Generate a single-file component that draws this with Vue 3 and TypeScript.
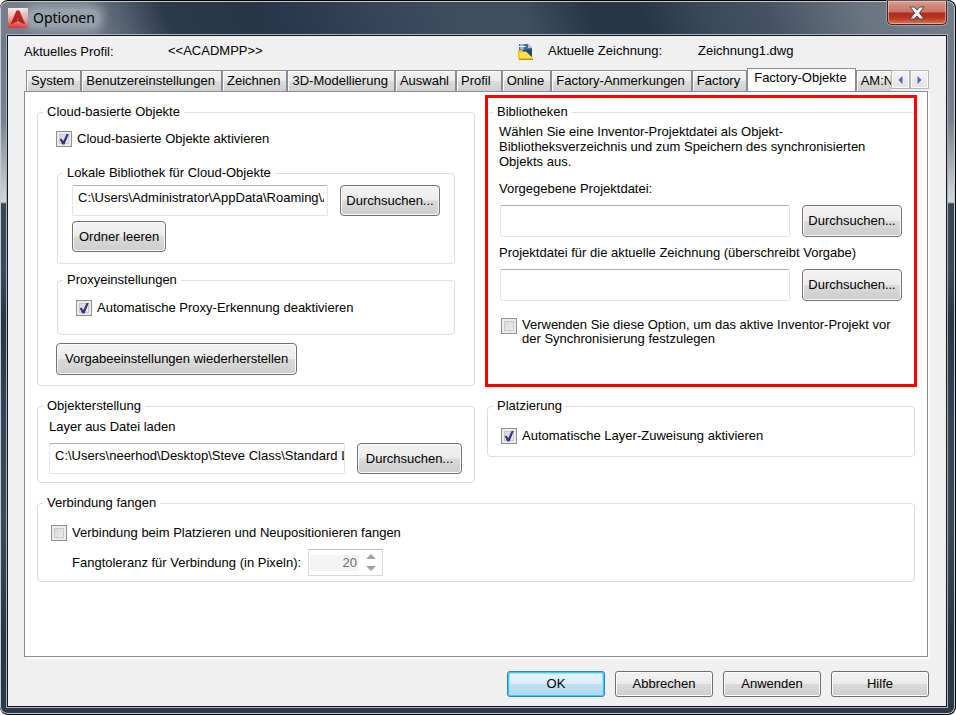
<script setup lang="ts">
import { ref } from 'vue'

interface Tab {
  label: string
  active?: boolean
  wide?: boolean
}

const tabs: Tab[] = [
  { label: 'System' },
  { label: 'Benutzereinstellungen' },
  { label: 'Zeichnen' },
  { label: '3D-Modellierung' },
  { label: 'Auswahl' },
  { label: 'Profil', wide: true },
  { label: 'Online' },
  { label: 'Factory-Anmerkungen' },
  { label: 'Factory' },
  { label: 'Factory-Objekte', active: true },
  { label: 'AM:N' },
]

const cloudEnabled = ref(true)
const proxyDisabled = ref(true)
const useActiveProject = ref(false)
const autoLayer = ref(true)
const snapOnPlace = ref(false)
const libraryPath = ref('C:\\Users\\Administrator\\AppData\\Roaming\\Autodesk')
const layerPath = ref('C:\\Users\\neerhod\\Desktop\\Steve Class\\Standard Layer')
const defaultProject = ref('')
const drawingProject = ref('')
const tolerance = ref('20')
</script>

<template>
  <div class="window">
    <header class="titlebar">
      <svg class="app-icon" viewBox="0 0 20 20" aria-hidden="true">
        <defs>
          <linearGradient id="tile" x1="0" y1="0" x2="0" y2="1">
            <stop offset="0" stop-color="#fbeeea" />
            <stop offset="0.5" stop-color="#eda8a0" />
            <stop offset="1" stop-color="#dc2f32" />
          </linearGradient>
          <linearGradient id="mark" x1="0" y1="0" x2="1" y2="1">
            <stop offset="0" stop-color="#d42a28" />
            <stop offset="1" stop-color="#8f1216" />
          </linearGradient>
        </defs>
        <rect width="20" height="20" fill="url(#tile)" />
        <path d="M8.400 2.400h3L17.400 16.400 12.600 14.600 10.200 12.800 7 14.600 2.600 16.600z" fill="url(#mark)" />
        <path d="M9.800 8.600l1.200 3-2.600.6z" fill="#c9473f" />
      </svg>
      <h1 class="title">Optionen</h1>
      <button class="close" type="button" aria-label="Schließen">
        <svg viewBox="0 0 16 14" aria-hidden="true">
          <path d="M1 1h4.300L8 4.100 10.700 1H15l-4.600 6 4.600 6h-4.300L8 9.900 5.300 13H1l4.600-6z" fill="#f4f4f4" stroke="#4d4a55" stroke-width="1" />
        </svg>
      </button>
    </header>

    <main class="client">
      <div class="profile">
        <span class="profile-label">Aktuelles Profil:</span>
        <span class="profile-name">&lt;&lt;ACADMPP&gt;&gt;</span>
        <svg class="drawing-icon" viewBox="0 0 16 17" aria-hidden="true">
          <path d="M1 1h9l4 4v10H1z" fill="#3b6f9f" />
          <path d="M10 1l4 4h-4z" fill="#a9c8e4" />
          <path d="M5 7l9-1v9H8z" fill="#1f4a76" />
          <path d="M4 0v7M.5 3.500h7" stroke="#f6fafd" stroke-width="1" />
          <path d="M2 1.500h1v1H2zM5 1.500h1v1H5zM2 4.500h1v1H2zM5 4.500h1v1H5z" fill="#e3edf6" />
          <path d="M0 7h4l1 1.500h3L15 15v2H1L0 15z" fill="#edbd1a" />
          <path d="M1 9.500l7-.5 6.500 6H2z" fill="#ffdf4d" />
          <path d="M1 16h14v1H1z" fill="#b98d10" />
        </svg>
        <span class="drawing-label">Aktuelle Zeichnung:</span>
        <span>Zeichnung1.dwg</span>
      </div>

      <div class="tabbar">
        <div class="tabs" role="tablist">
          <button
            v-for="tab in tabs"
            :key="tab.label"
            type="button"
            role="tab"
            class="tab"
            :class="{ active: tab.active, wide: tab.wide }"
            :aria-selected="!!tab.active"
          >{{ tab.label }}</button>
        </div>
        <div class="scrollers">
          <button type="button" aria-label="Zurück">
            <svg viewBox="0 0 5 8" aria-hidden="true"><path d="M4.500 0v8L.5 4z" fill="#4a63b8" /></svg>
          </button>
          <button type="button" aria-label="Weiter">
            <svg viewBox="0 0 5 8" aria-hidden="true"><path d="M.5 0v8l4-4z" fill="#4a63b8" /></svg>
          </button>
        </div>
      </div>

      <section class="panel" role="tabpanel">
        <div class="columns top-row">
          <fieldset class="group left">
            <legend>Cloud-basierte Objekte</legend>
            <div class="cloud">
              <label class="check">
                <input v-model="cloudEnabled" type="checkbox" />
                <span>Cloud-basierte Objekte aktivieren</span>
              </label>
              <fieldset class="group library">
                <legend>Lokale Bibliothek für Cloud-Objekte</legend>
                <div class="library-body">
                  <div class="field-row">
                    <input v-model="libraryPath" class="text" type="text" aria-label="Lokale Bibliothek" />
                    <button class="btn browse" type="button">Durchsuchen...</button>
                  </div>
                  <button class="btn" type="button">Ordner leeren</button>
                </div>
              </fieldset>
              <fieldset class="group proxy">
                <legend>Proxyeinstellungen</legend>
                <label class="check">
                  <input v-model="proxyDisabled" type="checkbox" />
                  <span>Automatische Proxy-Erkennung deaktivieren</span>
                </label>
              </fieldset>
              <button class="btn restore" type="button">Vorgabeeinstellungen wiederherstellen</button>
            </div>
          </fieldset>

          <div class="right highlight">
            <fieldset class="group">
              <legend>Bibliotheken</legend>
              <div class="projects">
                <p class="hint">Wählen Sie eine Inventor-Projektdatei als Objekt-Bibliotheksverzeichnis und zum Speichern des synchronisierten Objekts aus.</p>
                <label class="caption" for="default-project">Vorgegebene Projektdatei:</label>
                <div class="field-row">
                  <input id="default-project" v-model="defaultProject" class="text" type="text" />
                  <button class="btn browse" type="button">Durchsuchen...</button>
                </div>
                <label class="caption" for="drawing-project">Projektdatei für die aktuelle Zeichnung (überschreibt Vorgabe)</label>
                <div class="field-row">
                  <input id="drawing-project" v-model="drawingProject" class="text" type="text" />
                  <button class="btn browse" type="button">Durchsuchen...</button>
                </div>
                <label class="check multiline">
                  <input v-model="useActiveProject" type="checkbox" />
                  <span>Verwenden Sie diese Option, um das aktive Inventor-Projekt vor der Synchronisierung festzulegen</span>
                </label>
              </div>
            </fieldset>
          </div>
        </div>

        <div class="columns second-row">
          <fieldset class="group left">
            <legend>Objekterstellung</legend>
            <div class="creation">
              <label class="caption" for="layer-path">Layer aus Datei laden</label>
              <div class="field-row">
                <input id="layer-path" v-model="layerPath" class="text" type="text" />
                <button class="btn browse" type="button">Durchsuchen...</button>
              </div>
            </div>
          </fieldset>
          <fieldset class="group right">
            <legend>Platzierung</legend>
            <div class="placement">
              <label class="check">
                <input v-model="autoLayer" type="checkbox" />
                <span>Automatische Layer-Zuweisung aktivieren</span>
              </label>
            </div>
          </fieldset>
        </div>

        <fieldset class="group">
          <legend>Verbindung fangen</legend>
          <div class="snapping">
            <label class="check">
              <input v-model="snapOnPlace" type="checkbox" />
              <span>Verbindung beim Platzieren und Neupositionieren fangen</span>
            </label>
            <div class="tolerance">
              <label for="tolerance">Fangtoleranz für Verbindung (in Pixeln):</label>
              <div class="spinner">
                <input id="tolerance" v-model="tolerance" type="text" disabled />
                <div class="steps">
                  <button type="button" disabled aria-label="Mehr">
                    <svg viewBox="0 0 10 5" aria-hidden="true"><path d="M0 5l5-5 5 5z" fill="#a3a3a3" /></svg>
                  </button>
                  <button type="button" disabled aria-label="Weniger">
                    <svg viewBox="0 0 10 5" aria-hidden="true"><path d="M0 0l5 5 5-5z" fill="#a3a3a3" /></svg>
                  </button>
                </div>
              </div>
            </div>
          </div>
        </fieldset>
      </section>

      <footer class="actions">
        <button class="btn default" type="button">OK</button>
        <button class="btn" type="button">Abbrechen</button>
        <button class="btn" type="button">Anwenden</button>
        <button class="btn" type="button">Hilfe</button>
      </footer>
    </main>
  </div>
</template>

<style>
body {
  background: #fff;
}
</style>

<style scoped>
.window,
.window * {
  box-sizing: border-box;
}

.window {
  display: flex;
  flex-direction: column;
  min-height: 100vh;
  padding: 0 8px 7px 7px;
  border: 1px solid #000;
  border-left: 0;
  border-radius: 8px;
  background:
    linear-gradient(70deg, #76808b 0, #717b87 10%, #4d5b6c 14%, #2b394c 18%, #263548 27%, #2c3b4f 33%, #36455a 40%, #3f4d60 48%, #3f4d60 55%, #263548 62%, #263548 67%, #3a495c 74%, #445264 80%, #6a7581 90%, #747f89 100%) top / 100% 35px no-repeat,
    linear-gradient(#6f7a87 35px, #78828e 120px, #c9cdd1 190px, #d2d5d8 201px, #374555 203px, #3b495a 270px, #263548 320px, #34445a 420px, #3a495b 520px, #263548 640px, #2b394c 100%);
  box-shadow: inset 0 0 0 1px #c3cbd2;
  color: #000;
  font-family: "Liberation Sans", Arial, sans-serif;
  font-size: 13px;
  line-height: 16px;
}

button,
input {
  font: inherit;
  color: inherit;
}

.titlebar {
  display: flex;
  align-items: center;
  height: 34px;
  padding-left: 1px;
}

.app-icon {
  width: 20px;
  height: 20px;
}

.title {
  margin: 0 auto 0 0;
  padding: 0 5px;
  border-radius: 10px;
  background: rgba(190, 198, 206, 0.5);
  box-shadow: 0 0 8px 4px rgba(190, 198, 206, 0.5);
  font-family: "Noto Sans", "Open Sans", sans-serif;
  font-size: 14px;
  font-weight: 400;
  line-height: 18px;
}

.close {
  display: flex;
  align-items: center;
  justify-content: center;
  align-self: flex-start;
  width: 60px;
  height: 24px;
  padding: 0;
  border: 1px solid #43202a;
  border-top: 0;
  border-radius: 0 0 5px 5px;
  background: linear-gradient(#d99a90 0, #c97265 11px, #b02a1c 12px, #b8371f 17px, #d8775a 100%);
  box-shadow: inset 0 0 0 1px rgba(255, 220, 210, 0.5), 0 0 0 1px rgba(220, 225, 230, 0.4);
}

.close svg {
  width: 16px;
  height: 14px;
}

.client {
  display: flex;
  flex: 1;
  flex-direction: column;
  padding: 0 17px 9px 16px;
  border: 1px solid #12161c;
  background: #f0f0f0;
  box-shadow: 0 0 0 1px #a9b3bc;
}

.profile {
  display: flex;
  align-items: center;
  height: 32px;
  padding-bottom: 2px;
}

.profile-label {
  flex: 0 0 144px;
  padding-top: 2px;
}

.profile-name {
  flex: 0 0 350px;
}

.drawing-icon {
  flex: none;
  width: 16px;
  height: 17px;
  margin-right: 14px;
}

.drawing-label {
  flex: 0 0 150px;
}

.tabbar {
  display: flex;
  align-items: flex-end;
  height: 24px;
  margin-bottom: -1px;
}

.tabs {
  display: flex;
  flex: 1;
  align-items: flex-end;
  min-width: 0;
  height: 24px;
  padding-left: 2px;
  overflow: hidden;
}

.tab {
  flex: none;
  height: 22px;
  padding: 0 6px 0 4px;
  border: 1px solid #898c95;
  background: linear-gradient(#f2f2f2 0, #ebebeb 50%, #dcdcdc 51%, #cfcfcf 100%);
  box-shadow: inset 1px 1px 0 #fcfcfc;
  white-space: nowrap;
}

.tab.wide {
  padding-right: 10px;
}

.tab.active {
  height: 24px;
  padding: 0 8px 4px 6px;
  border-bottom-color: #fff;
  background: #fff;
}

.scrollers {
  display: flex;
  height: 19px;
  margin-bottom: 3px;
}

.scrollers button {
  display: flex;
  align-items: center;
  justify-content: center;
  width: 19px;
  padding: 0;
  border: 1px solid #b6b6b6;
  background: linear-gradient(#f4f4f4, #e2e2e2);
  box-shadow: inset 0 0 0 1px #fafafa;
}

.scrollers svg {
  width: 5px;
  height: 8px;
}

.panel {
  flex: 1;
  margin-right: 1px;
  padding: 12px 12px 20px;
  border: 1px solid #898c95;
  background: #fff;
  box-shadow: 2px 2px 0 #fcfcfc;
}

.columns {
  display: flex;
  gap: 12px;
}

.top-row {
  margin-bottom: 12px;
}

.second-row {
  align-items: flex-start;
  margin-bottom: 12px;
}

.left {
  flex: 438 1 0;
}

.right {
  flex: 428 1 0;
}

.group {
  min-width: 0;
  margin: 0;
  padding: 0;
  border: 1px solid #d5dfe5;
  border-radius: 4px;
}

.group legend {
  margin-left: 5px;
  padding: 0 4px;
}

.cloud {
  padding: 11px 19px 10px 18px;
}

.check {
  display: flex;
  align-items: center;
  gap: 5px;
}

.check input {
  position: relative;
  flex: none;
  width: 16px;
  height: 16px;
  margin: 0;
  border: 1px solid #8e8f8f;
  background: linear-gradient(135deg, #cbcfd5, #f6f6f6);
  box-shadow: inset 0 0 0 2px #ececec, inset 0 0 0 3px #c6cad0;
  appearance: none;
}

.check input:checked::after {
  position: absolute;
  inset: 1px;
  background: #31347c;
  clip-path: polygon(14% 52%, 30% 45%, 43% 68%, 72% 8%, 90% 8%, 54% 96%, 36% 96%);
  content: "";
}

.check.multiline {
  align-items: flex-start;
  line-height: 14px;
}

.library {
  margin: 18px 0 8px 1px;
}

.library-body {
  display: flex;
  flex-direction: column;
  gap: 5px;
  align-items: flex-start;
  padding: 4px 14px 11px;
}

.field-row {
  display: flex;
  gap: 12px;
  width: 100%;
}

.text {
  flex: 1;
  min-width: 0;
  height: 31px;
  padding: 0 3px 6px 5px;
  border: 1px solid #e2e6ec;
  border-top-color: #abadb3;
  border-radius: 2px;
  background: #fff;
}

#layer-path {
  padding-right: 0;
}

.btn {
  height: 31px;
  padding: 0 6px;
  border: 1px solid #707070;
  border-radius: 4px;
  background: linear-gradient(#f3f3f3 0, #ebebeb 49%, #dadada 51%, #cdcdcd 100%);
  box-shadow: inset 0 0 0 1px #fbfbfb;
  white-space: nowrap;
}

.browse {
  flex: 0 0 100px;
  padding: 0;
}

.proxy {
  margin: 0 0 8px 1px;
}

.proxy .check {
  padding: 12px 18px 18px;
}

.restore {
  height: 32px;
  padding: 0 8px;
}

.highlight {
  margin: -9px -2px -1px;
  padding: 6px 0 0;
  border: 3px solid #f00;
}

.highlight .group {
  margin: 0 -1px;
  border-right-color: transparent;
  border-bottom-color: transparent;
  border-left-color: transparent;
}

.projects {
  padding: 4px 12px 16px 11px;
}

.projects .text,
.projects .btn {
  height: 32px;
}

.hint {
  margin: 0 0 12px;
  line-height: 15px;
}

.caption {
  display: block;
  margin-bottom: 8px;
}

.projects .field-row {
  padding-left: 1px;
  margin-bottom: 8px;
}

.projects .check {
  padding-left: 2px;
  margin-top: 17px;
}

.creation {
  padding: 5px 12px 8px 11px;
}

.creation .browse {
  flex-basis: 105px;
}

.placement {
  padding: 14px 13px 12px;
}

.snapping {
  padding: 14px 13px 5px;
}

.tolerance {
  display: flex;
  align-items: center;
  gap: 7px;
  margin-top: 8px;
  padding-left: 21px;
}

.spinner {
  display: flex;
  align-items: center;
  width: 75px;
  height: 27px;
  padding: 0 6px 0 1px;
  border: 1px solid #d3dae2;
  border-top-color: #b9c0cc;
  background: #fff;
}

.spinner input {
  flex: 1;
  min-width: 0;
  height: 16px;
  padding: 0 2px;
  border: 0;
  background: #f4f4f4;
  color: #6d6d6d;
  text-align: right;
}

.steps {
  display: flex;
  flex-direction: column;
  gap: 7px;
  margin-left: 7px;
}

.steps button {
  display: block;
  width: 10px;
  height: 5px;
  padding: 0;
  border: 0;
  background: none;
}

.steps svg {
  display: block;
  width: 10px;
  height: 5px;
}

.actions {
  display: flex;
  gap: 10px;
  justify-content: flex-end;
  margin-top: 14px;
}

.actions .btn {
  width: 98px;
  height: 26px;
  border-radius: 3px;
}

.actions .default {
  border-color: #3c7fb1;
  background: linear-gradient(#e9f5fc 0, #d9edf9 49%, #bfe0f2 51%, #b2d8ee 100%);
  box-shadow: inset 0 0 0 1px #35ccf5, inset 0 0 0 2px #9be3fa;
}
</style>
